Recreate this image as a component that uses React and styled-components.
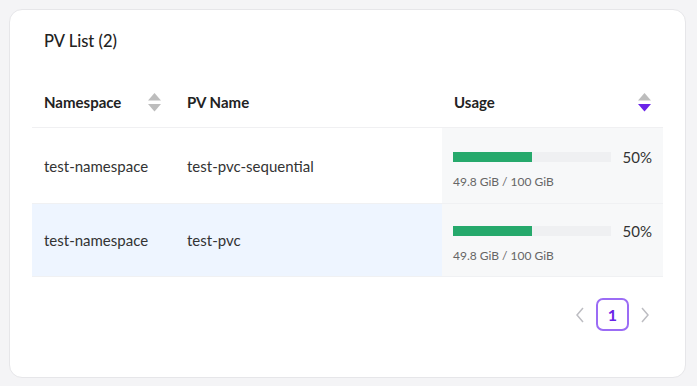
import React from "react";
import styled, { createGlobalStyle } from "styled-components";

const Global = createGlobalStyle`
  html, body { margin: 0; padding: 0; background: #f4f4f6; }
  body { font-family: "Lato", "Liberation Sans", sans-serif; color: #222; }
`;

const Page = styled.div`
  padding: 9px 11px 8px 9px;
`;

const Card = styled.section`
  box-sizing: border-box;
  height: 369px;
  background: #fff;
  border: 1px solid #e6e6e9;
  border-radius: 13px;
  padding: 20px 22px 0 22px;
  display: flex;
  flex-direction: column;
`;

const Title = styled.h2`
  margin: 0;
  padding: 0 12px;
  font-size: 16.5px;
  line-height: 22px;
  font-weight: 500;
  color: #222;
`;

const Table = styled.div`
  margin-top: 25px;
  display: flex;
  flex-direction: column;
`;

const Row = styled.div`
  display: grid;
  grid-template-columns: 143px 267px 1fr;
  height: ${(p) => p.$h}px;
  border-bottom: 1px solid ${(p) => (p.$header ? "#f0f0f2" : "#f0f1f3")};
  background: ${(p) => (p.$hl ? "#eef5ff" : "transparent")};
`;

const HeadCell = styled.div`
  display: flex;
  align-items: center;
  justify-content: space-between;
  padding: 0 ${(p) => p.$pr || 12}px 0 12px;
  font-size: 15px;
  font-weight: 700;
  color: #222;
`;

const Cell = styled.div`
  display: flex;
  align-items: center;
  padding: 0 12px;
  font-size: 15px;
  color: #333;
`;

const UsageCell = styled.div`
  display: flex;
  flex-direction: column;
  justify-content: center;
  gap: 7px;
  padding: 5px 11px 0 11px;
  background: #f7f8f9;
`;

const BarLine = styled.div`
  display: flex;
  align-items: center;
  gap: 12px;
`;

const Track = styled.div`
  flex: 1;
  height: 10px;
  background: #eff0f2;
`;

const Fill = styled.div`
  height: 100%;
  background: #26a96c;
`;

const Pct = styled.span`
  font-size: 15px;
  color: #333;
  line-height: 20px;
`;

const Sub = styled.span`
  font-size: 12px;
  color: #666;
  line-height: 16px;
`;

const Pager = styled.nav`
  margin-top: 21px;
  display: flex;
  justify-content: flex-end;
  align-items: center;
  gap: 6px;
  padding-right: 8px;
`;

const Arrow = styled.button`
  width: 20px;
  height: 33px;
  border: 0;
  background: none;
  padding: 0;
  display: flex;
  align-items: center;
  justify-content: center;
  color: #bdbdc2;
`;

const PageBtn = styled.button`
  box-sizing: border-box;
  width: 33px;
  height: 33px;
  border: 2px solid #9b6cf5;
  border-radius: 7px;
  background: #fff;
  color: #6a24e8;
  font-family: inherit;
  font-size: 16px;
  font-weight: 700;
  display: flex;
  align-items: center;
  justify-content: center;
  padding: 0;
`;

const SortIcon = ({ active }) => (
  <svg width="13" height="19" viewBox="0 0 13 19">
    <polygon points="6.5,0 13,7.5 0,7.5" fill="#bdbdbd" />
    <polygon points="0,11 13,11 6.5,18.5" fill={active ? "#6a24e8" : "#bdbdbd"} />
  </svg>
);

const Chevron = ({ dir }) => (
  <svg width="10" height="16" viewBox="0 0 10 16" fill="none" stroke="currentColor" strokeWidth="1.5">
    {dir === "left" ? <polyline points="8,1 2,8 8,15" /> : <polyline points="2,1 8,8 2,15" />}
  </svg>
);

const rows = [
  { ns: "test-namespace", pv: "test-pvc-sequential", pct: 50, used: "49.8 GiB / 100 GiB", h: 75 },
  { ns: "test-namespace", pv: "test-pvc", pct: 50, used: "49.8 GiB / 100 GiB", h: 72, hl: true },
];

export default function App() {
  return (
    <>
      <Global />
      <Page>
        <Card>
          <Title>PV List (2)</Title>
          <Table>
            <Row $header $h={50}>
              <HeadCell $pr={14}>
                Namespace
                <SortIcon />
              </HeadCell>
              <HeadCell>PV Name</HeadCell>
              <HeadCell>
                Usage
                <SortIcon active />
              </HeadCell>
            </Row>
            {rows.map((r, i) => (
              <Row key={i} $h={r.h} $hl={r.hl}>
                <Cell>{r.ns}</Cell>
                <Cell>{r.pv}</Cell>
                <UsageCell>
                  <BarLine>
                    <Track>
                      <Fill style={{ width: `${r.pct}%` }} />
                    </Track>
                    <Pct>{r.pct}%</Pct>
                  </BarLine>
                  <Sub>{r.used}</Sub>
                </UsageCell>
              </Row>
            ))}
          </Table>
          <Pager>
            <Arrow aria-label="previous">
              <Chevron dir="left" />
            </Arrow>
            <PageBtn>1</PageBtn>
            <Arrow aria-label="next">
              <Chevron dir="right" />
            </Arrow>
          </Pager>
        </Card>
      </Page>
    </>
  );
}
